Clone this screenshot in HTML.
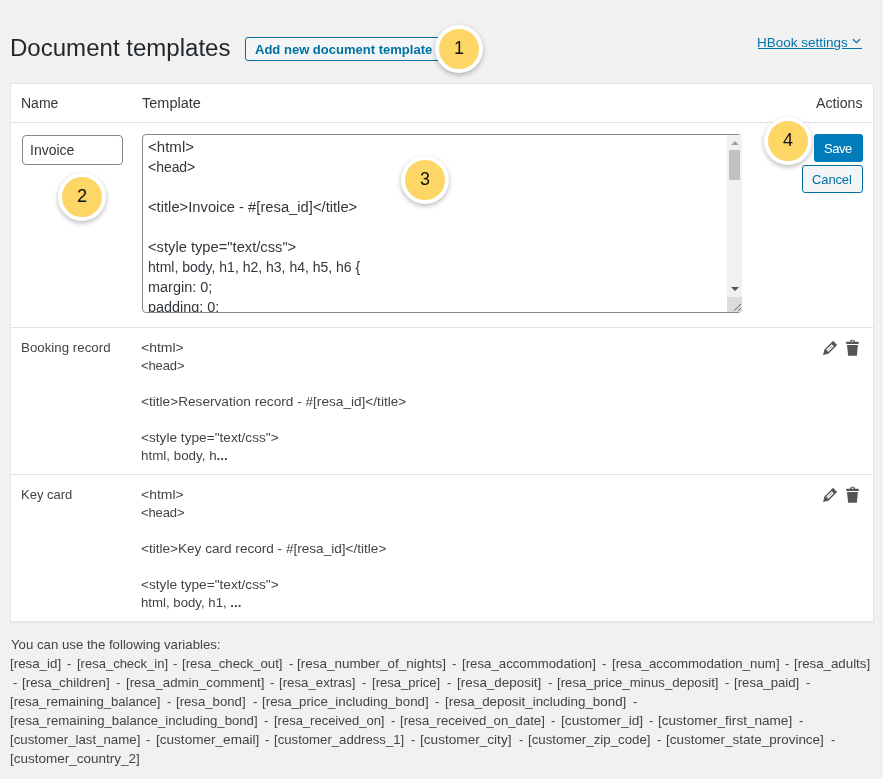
<!DOCTYPE html>
<html>
<head>
<meta charset="utf-8">
<style>
html,body{margin:0;padding:0;}
body{width:883px;height:779px;overflow:hidden;background:#f1f1f1;font-family:"Liberation Sans",sans-serif;color:#444;font-size:13px;position:relative;}
.t{position:absolute;white-space:pre;line-height:1;transform-origin:0 0;will-change:transform;}
.box{position:absolute;box-sizing:border-box;}
.sp{margin:0 5.70px;}
.sp0{margin:0 5.70px 0 2.00px;}
.sp1{margin-left:5.70px;}
.circ{position:absolute;box-sizing:border-box;width:48px;height:48px;border-radius:50%;background:#fdd666;border:4px solid #fff;box-shadow:0 2px 5px rgba(0,0,0,.28);}
.circ span{position:absolute;left:0;right:0;text-align:center;font-size:18px;line-height:1;color:#111;}
</style>
</head>
<body>
<div class="box" style="left:245px;top:37px;width:200px;height:24px;border:1px solid #0071a1;border-radius:3px;background:#f3f5f6;"></div>
<div class="box" style="left:10px;top:83px;width:864px;height:539px;background:#fff;border:1px solid #e5e5e5;box-shadow:0 1px 1px rgba(0,0,0,.04);"></div>
<div class="box" style="left:11px;top:122px;width:862px;height:1px;background:#e1e1e1;"></div>
<div class="box" style="left:22px;top:135px;width:101px;height:30px;border:1px solid #7e8993;border-radius:4px;background:#fff;"></div>
<div class="box" style="left:814px;top:134px;width:49px;height:28px;background:#007cba;border-radius:3px;"></div>
<div class="box" style="left:802px;top:165px;width:61px;height:28px;border:1px solid #0071a1;border-radius:3px;background:#f3f5f6;"></div>
<div class="box" style="left:11px;top:327px;width:862px;height:1px;background:#e1e1e1;"></div>
<div class="box" style="left:11px;top:474px;width:862px;height:1px;background:#e1e1e1;"></div>

<div class="t" id="h1" style="left:9.81px;top:36.5px;font-size:23px;color:#23282d;transform:scaleX(1.0452);">Document templates</div>
<div class="t" id="addtxt" style="left:254.70px;top:43px;font-size:13px;color:#0071a1;font-weight:700;transform:scaleX(1.0017);">Add new document template</div>
<div class="t" id="hbook" style="left:757.36px;top:36px;font-size:13px;color:#0073aa;transform:scaleX(1.0372);">HBook settings</div>
<div class="t" id="thname" style="left:20.50px;top:96px;font-size:14px;color:#32373c;">Name</div>
<div class="t" id="thtpl" style="left:142.10px;top:96px;font-size:14px;color:#32373c;transform:scaleX(1.0375);">Template</div>
<div class="t" id="thact" style="left:815.90px;top:96px;font-size:14px;color:#32373c;transform:scaleX(1.0130);">Actions</div>
<div class="t" id="inv" style="left:30.30px;top:143px;font-size:14px;color:#32373c;">Invoice</div>
<div class="t" id="save" style="left:824.00px;top:142px;font-size:13px;color:#ffffff;letter-spacing:-0.467px;">Save</div>
<div class="t" id="cancel" style="left:812.40px;top:173px;font-size:13px;color:#0071a1;letter-spacing:-0.120px;">Cancel</div>
<div class="t" id="r2n" style="left:21.08px;top:341px;font-size:13px;color:#444;transform:scaleX(1.0244);">Booking record</div>
<div class="t" id="r2t0" style="left:141.33px;top:341px;font-size:13px;color:#444;transform:scaleX(1.0737);">&lt;html&gt;</div>
<div class="t" id="r2t1" style="left:141.40px;top:359px;font-size:13px;color:#444;letter-spacing:-0.120px;">&lt;head&gt;</div>
<div class="t" id="r2t3" style="left:141.35px;top:395px;font-size:13px;color:#444;transform:scaleX(1.0490);">&lt;title&gt;Reservation record - #[resa_id]&lt;/title&gt;</div>
<div class="t" id="r2t5" style="left:141.35px;top:431px;font-size:13px;color:#444;transform:scaleX(1.0508);">&lt;style type="text/css"&gt;</div>
<div class="t" id="r2t6" style="left:141.37px;top:449px;font-size:13px;color:#444;transform:scaleX(1.0289);">html, body, h<b>...</b></div>
<div class="t" id="r3n" style="left:21.10px;top:488px;font-size:13px;color:#444;">Key card</div>
<div class="t" id="r3t0" style="left:141.33px;top:488px;font-size:13px;color:#444;transform:scaleX(1.0737);">&lt;html&gt;</div>
<div class="t" id="r3t1" style="left:141.40px;top:506px;font-size:13px;color:#444;letter-spacing:-0.120px;">&lt;head&gt;</div>
<div class="t" id="r3t3" style="left:141.36px;top:542px;font-size:13px;color:#444;transform:scaleX(1.0446);">&lt;title&gt;Key card record - #[resa_id]&lt;/title&gt;</div>
<div class="t" id="r3t5" style="left:141.35px;top:578px;font-size:13px;color:#444;transform:scaleX(1.0508);">&lt;style type="text/css"&gt;</div>
<div class="t" id="r3t6" style="left:141.38px;top:596px;font-size:13px;color:#444;transform:scaleX(1.0165);">html, body, h1, <b>...</b></div>
<div class="t" id="v0" style="left:10.50px;top:638px;font-size:13px;color:#444;transform:scaleX(1.0161);">You can use the following variables:</div>
<div class="t" id="v1_0" style="left:9.88px;top:657px;font-size:13px;color:#444;transform:scaleX(1.0250);">[resa_id]</div>
<div class="t" id="v1_1" style="left:67.10px;top:657px;font-size:13px;color:#444;">-</div>
<div class="t" id="v1_2" style="left:76.50px;top:657px;font-size:13px;color:#444;">[resa_check_in]</div>
<div class="t" id="v1_3" style="left:173.30px;top:657px;font-size:13px;color:#444;">-</div>
<div class="t" id="v1_4" style="left:182.48px;top:657px;font-size:13px;color:#444;transform:scaleX(1.0155);">[resa_check_out]</div>
<div class="t" id="v1_5" style="left:288.55px;top:657px;font-size:13px;color:#444;">-</div>
<div class="t" id="v1_6" style="left:297.46px;top:657px;font-size:13px;color:#444;transform:scaleX(1.0359);">[resa_number_of_nights]</div>
<div class="t" id="v1_7" style="left:452.40px;top:657px;font-size:13px;color:#444;">-</div>
<div class="t" id="v1_8" style="left:461.58px;top:657px;font-size:13px;color:#444;transform:scaleX(1.0177);">[resa_accommodation]</div>
<div class="t" id="v1_9" style="left:602.20px;top:657px;font-size:13px;color:#444;">-</div>
<div class="t" id="v1_10" style="left:611.88px;top:657px;font-size:13px;color:#444;transform:scaleX(1.0216);">[resa_accommodation_num]</div>
<div class="t" id="v1_11" style="left:785.20px;top:657px;font-size:13px;color:#444;">-</div>
<div class="t" id="v1_12" style="left:794.38px;top:657px;font-size:13px;color:#444;transform:scaleX(1.0233);">[resa_adults]</div>
<div class="t" id="v2_0" style="left:12.90px;top:676px;font-size:13px;color:#444;">-</div>
<div class="t" id="v2_1" style="left:22.07px;top:676px;font-size:13px;color:#444;transform:scaleX(1.0274);">[resa_children]</div>
<div class="t" id="v2_2" style="left:116.35px;top:676px;font-size:13px;color:#444;">-</div>
<div class="t" id="v2_3" style="left:125.68px;top:676px;font-size:13px;color:#444;transform:scaleX(1.0194);">[resa_admin_comment]</div>
<div class="t" id="v2_4" style="left:270.10px;top:676px;font-size:13px;color:#444;">-</div>
<div class="t" id="v2_5" style="left:279.28px;top:676px;font-size:13px;color:#444;transform:scaleX(1.0178);">[resa_extras]</div>
<div class="t" id="v2_6" style="left:362.20px;top:676px;font-size:13px;color:#444;">-</div>
<div class="t" id="v2_7" style="left:372.20px;top:676px;font-size:13px;color:#444;transform:scaleX(1.0045);">[resa_price]</div>
<div class="t" id="v2_8" style="left:447.15px;top:676px;font-size:13px;color:#444;">-</div>
<div class="t" id="v2_9" style="left:457.17px;top:676px;font-size:13px;color:#444;transform:scaleX(1.0325);">[resa_deposit]</div>
<div class="t" id="v2_10" style="left:547.90px;top:676px;font-size:13px;color:#444;">-</div>
<div class="t" id="v2_11" style="left:557.38px;top:676px;font-size:13px;color:#444;transform:scaleX(1.0159);">[resa_price_minus_deposit]</div>
<div class="t" id="v2_12" style="left:724.70px;top:676px;font-size:13px;color:#444;">-</div>
<div class="t" id="v2_13" style="left:733.89px;top:676px;font-size:13px;color:#444;transform:scaleX(1.0143);">[resa_paid]</div>
<div class="t" id="v2_14" style="left:805.70px;top:676px;font-size:13px;color:#444;">-</div>
<div class="t" id="v3_0" style="left:9.89px;top:695px;font-size:13px;color:#444;transform:scaleX(1.0054);">[resa_remaining_balance]</div>
<div class="t" id="v3_1" style="left:166.85px;top:695px;font-size:13px;color:#444;">-</div>
<div class="t" id="v3_2" style="left:176.39px;top:695px;font-size:13px;color:#444;transform:scaleX(1.0134);">[resa_bond]</div>
<div class="t" id="v3_3" style="left:252.60px;top:695px;font-size:13px;color:#444;">-</div>
<div class="t" id="v3_4" style="left:262.28px;top:695px;font-size:13px;color:#444;transform:scaleX(1.0248);">[resa_price_including_bond]</div>
<div class="t" id="v3_5" style="left:435.25px;top:695px;font-size:13px;color:#444;">-</div>
<div class="t" id="v3_6" style="left:444.57px;top:695px;font-size:13px;color:#444;transform:scaleX(1.0280);">[resa_deposit_including_bond]</div>
<div class="t" id="v3_7" style="left:632.90px;top:695px;font-size:13px;color:#444;">-</div>
<div class="t" id="v4_0" style="left:9.89px;top:714px;font-size:13px;color:#444;transform:scaleX(1.0136);">[resa_remaining_balance_including_bond]</div>
<div class="t" id="v4_1" style="left:264.15px;top:714px;font-size:13px;color:#444;">-</div>
<div class="t" id="v4_2" style="left:273.50px;top:714px;font-size:13px;color:#444;letter-spacing:-0.006px;">[resa_received_on]</div>
<div class="t" id="v4_3" style="left:390.75px;top:714px;font-size:13px;color:#444;">-</div>
<div class="t" id="v4_4" style="left:400.49px;top:714px;font-size:13px;color:#444;transform:scaleX(1.0121);">[resa_received_on_date]</div>
<div class="t" id="v4_5" style="left:551.30px;top:714px;font-size:13px;color:#444;">-</div>
<div class="t" id="v4_6" style="left:560.75px;top:714px;font-size:13px;color:#444;transform:scaleX(1.0526);">[customer_id]</div>
<div class="t" id="v4_7" style="left:648.95px;top:714px;font-size:13px;color:#444;">-</div>
<div class="t" id="v4_8" style="left:658.46px;top:714px;font-size:13px;color:#444;transform:scaleX(1.0433);">[customer_first_name]</div>
<div class="t" id="v4_9" style="left:799.10px;top:714px;font-size:13px;color:#444;">-</div>
<div class="t" id="v5_0" style="left:9.88px;top:733px;font-size:13px;color:#444;transform:scaleX(1.0190);">[customer_last_name]</div>
<div class="t" id="v5_1" style="left:146.45px;top:733px;font-size:13px;color:#444;">-</div>
<div class="t" id="v5_2" style="left:155.96px;top:733px;font-size:13px;color:#444;transform:scaleX(1.0433);">[customer_email]</div>
<div class="t" id="v5_3" style="left:265.00px;top:733px;font-size:13px;color:#444;">-</div>
<div class="t" id="v5_4" style="left:274.19px;top:733px;font-size:13px;color:#444;transform:scaleX(1.0126);">[customer_address_1]</div>
<div class="t" id="v5_5" style="left:410.95px;top:733px;font-size:13px;color:#444;">-</div>
<div class="t" id="v5_6" style="left:420.45px;top:733px;font-size:13px;color:#444;transform:scaleX(1.0465);">[customer_city]</div>
<div class="t" id="v5_7" style="left:518.80px;top:733px;font-size:13px;color:#444;">-</div>
<div class="t" id="v5_8" style="left:528.48px;top:733px;font-size:13px;color:#444;transform:scaleX(1.0212);">[customer_zip_code]</div>
<div class="t" id="v5_9" style="left:656.95px;top:733px;font-size:13px;color:#444;">-</div>
<div class="t" id="v5_10" style="left:666.26px;top:733px;font-size:13px;color:#444;transform:scaleX(1.0351);">[customer_state_province]</div>
<div class="t" id="v5_11" style="left:830.80px;top:733px;font-size:13px;color:#444;">-</div>
<div class="t" id="v6_0" style="left:9.86px;top:752px;font-size:13px;color:#444;transform:scaleX(1.0382);">[customer_country_2]</div>
<div class="box" style="left:758px;top:48px;width:76px;height:1px;background:#0073aa;"></div>
<div class="box" style="left:842px;top:48px;width:20px;height:1px;background:#0073aa;"></div>
<svg class="box" style="left:852px;top:38px" width="9" height="6" viewBox="0 0 9 6"><path d="M1,1.3 L4.5,4.6 L8,1.3" fill="none" stroke="#0073aa" stroke-width="1.25"/></svg>
<div class="box" style="left:142px;top:134px;width:600px;height:179px;border:1px solid #7e8993;border-radius:4px;background:#fff;overflow:hidden;">
<div class="t" id="ta0" style="left:5.12px;top:5px;font-size:14px;color:#32373c;transform:scaleX(1.0756);">&lt;html&gt;</div><div class="t" id="ta1" style="left:5.20px;top:25px;font-size:14px;color:#32373c;letter-spacing:-0.040px;">&lt;head&gt;</div><div class="t" id="ta3" style="left:5.15px;top:65px;font-size:14px;color:#32373c;transform:scaleX(1.0543);">&lt;title&gt;Invoice - #[resa_id]&lt;/title&gt;</div><div class="t" id="ta5" style="left:5.15px;top:105px;font-size:14px;color:#32373c;transform:scaleX(1.0507);">&lt;style type="text/css"&gt;</div><div class="t" id="ta6" style="left:5.20px;top:125px;font-size:14px;color:#32373c;">html, body, h1, h2, h3, h4, h5, h6 {</div><div class="t" id="ta7" style="left:5.17px;top:145px;font-size:14px;color:#32373c;transform:scaleX(1.0333);">margin: 0;</div><div class="t" id="ta8" style="left:5.17px;top:165px;font-size:14px;color:#32373c;transform:scaleX(1.0269);">padding: 0;</div>
</div>
<div class="box" style="left:727px;top:135px;width:15px;height:177px;background:#f1f1f1;"></div>
<div class="box" style="left:729px;top:150px;width:11px;height:30px;background:#c1c1c1;"></div>
<svg class="box" style="left:731px;top:140px" width="8" height="6" viewBox="0 0 8 6"><path d="M0,5 L4,1 L8,5 Z" fill="#a3a3a3"/></svg>
<svg class="box" style="left:731px;top:286px" width="8" height="6" viewBox="0 0 8 6"><path d="M0,1 L4,5 L8,1 Z" fill="#505050"/></svg>
<div class="box" style="left:727px;top:297px;width:15px;height:15px;background:#dcdcdc;"></div>
<svg class="box" style="left:727px;top:297px" width="15" height="15" viewBox="0 0 15 15"><path d="M6.9,13.8 L14,7 M11.1,13.8 L14,11.2" stroke="#555" stroke-width="0.9"/></svg>
<svg class="box" style="left:815px;top:335px" width="50" height="27" viewBox="0 0 50 27">
  <g transform="translate(8.1,19.9) rotate(-45)">
    <path d="M0,0 L4.6,-2.85 L17,-2.85 L17,2.85 L4.6,2.85 Z" fill="#555"/>
    <rect x="5.7" y="-1.45" width="7.9" height="2.9" fill="#fff"/>
    <path d="M5.9,0 L13.4,0" stroke="#555" stroke-width="0.85" stroke-dasharray="1,0.95"/>
  </g>
  <rect x="35.1" y="4.8" width="4.8" height="3" rx="1.5" fill="#555"/>
  <rect x="36.4" y="5.7" width="2.2" height="1.3" fill="#fff"/>
  <rect x="31" y="6.8" width="12.9" height="2.1" rx="1" fill="#555"/>
  <path d="M32,9.9 L42.9,9.9 L41.9,20.3 Q41.85,20.8 41.4,20.8 L33.6,20.8 Q33.15,20.8 33.1,20.3 Z" fill="#555"/>
</svg>
<svg class="box" style="left:815px;top:482px" width="50" height="27" viewBox="0 0 50 27">
  <g transform="translate(8.1,19.9) rotate(-45)">
    <path d="M0,0 L4.6,-2.85 L17,-2.85 L17,2.85 L4.6,2.85 Z" fill="#555"/>
    <rect x="5.7" y="-1.45" width="7.9" height="2.9" fill="#fff"/>
    <path d="M5.9,0 L13.4,0" stroke="#555" stroke-width="0.85" stroke-dasharray="1,0.95"/>
  </g>
  <rect x="35.1" y="4.8" width="4.8" height="3" rx="1.5" fill="#555"/>
  <rect x="36.4" y="5.7" width="2.2" height="1.3" fill="#fff"/>
  <rect x="31" y="6.8" width="12.9" height="2.1" rx="1" fill="#555"/>
  <path d="M32,9.9 L42.9,9.9 L41.9,20.3 Q41.85,20.8 41.4,20.8 L33.6,20.8 Q33.15,20.8 33.1,20.3 Z" fill="#555"/>
</svg>
<div class="circ" style="left:435px;top:25px"><span style="top:10px">1</span></div>
<div class="circ" style="left:58px;top:173px"><span style="top:10px">2</span></div>
<div class="circ" style="left:401px;top:156px"><span style="top:10px">3</span></div>
<div class="circ" style="left:764px;top:117px"><span style="top:10px">4</span></div>

</body>
</html>
